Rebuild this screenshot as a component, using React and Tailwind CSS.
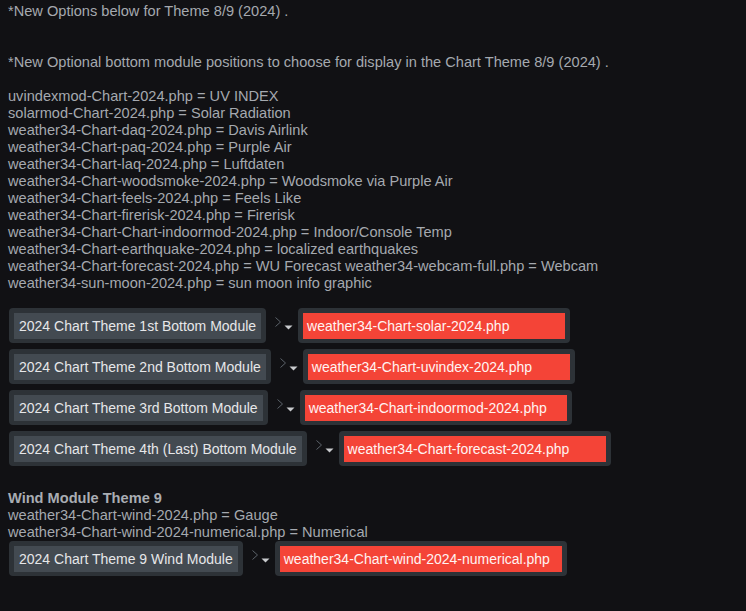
import React from "react";

function Arrow() {
  return (
    <svg width="18" height="18" viewBox="0 0 18 18" className="shrink-0 ml-[9px] mr-[5px]">
      <path d="M0.5 0.5 L5.5 5 L0.5 9.5" fill="none" stroke="#5c636a" strokeWidth="1" />
      <path d="M9.5 8.5 L17.5 8.5 L13.5 12.5 Z" fill="#c9cbce" />
    </svg>
  );
}

function Row({ label, value, width }) {
  return (
    <div className="flex items-center">
      <div className="bg-[#2d3237] rounded-[4px] p-[5px] pb-[4px]">
        <div className="bg-[#434a51] h-[26px] px-[5px] flex items-center text-[#e6e7e9] whitespace-nowrap">
          {label}
        </div>
      </div>
      <Arrow />
      <div className="bg-[#2d3237] rounded-[4px] p-[5px] pb-[4px]">
        <div
          className="bg-[#f44437] h-[26px] pl-[4px] flex items-center text-[#fff3f2] whitespace-nowrap"
          style={{ width }}
        >
          {value}
        </div>
      </div>
    </div>
  );
}

export default function App() {
  const lines = [
    "uvindexmod-Chart-2024.php = UV INDEX",
    "solarmod-Chart-2024.php = Solar Radiation",
    "weather34-Chart-daq-2024.php = Davis Airlink",
    "weather34-Chart-paq-2024.php = Purple Air",
    "weather34-Chart-laq-2024.php = Luftdaten",
    "weather34-Chart-woodsmoke-2024.php = Woodsmoke via Purple Air",
    "weather34-Chart-feels-2024.php = Feels Like",
    "weather34-Chart-firerisk-2024.php = Firerisk",
    "weather34-Chart-Chart-indoormod-2024.php = Indoor/Console Temp",
    "weather34-Chart-earthquake-2024.php = localized earthquakes",
    "weather34-Chart-forecast-2024.php = WU Forecast weather34-webcam-full.php = Webcam",
    "weather34-sun-moon-2024.php = sun moon info graphic",
  ];
  return (
    <div
      className="min-h-[611px] w-full bg-[#111114] text-[#a5a9af] text-[14.6px] leading-[17px] pl-[8px] pt-[3px]"
      style={{ fontFamily: '"Liberation Sans", Arial, sans-serif' }}
    >
      <div>*New Options below for Theme 8/9 (2024) .</div>
      <div className="mt-[34px]">
        *New Optional bottom module positions to choose for display in the Chart Theme 8/9 (2024) .
      </div>
      <div className="mt-[17px]">
        {lines.map((l) => (
          <div key={l}>{l}</div>
        ))}
      </div>
      <div className="mt-[16px] ml-[1px] flex flex-col gap-[6px] text-[14px]">
        <Row label="2024 Chart Theme 1st Bottom Module" value="weather34-Chart-solar-2024.php" width={262} />
        <Row label="2024 Chart Theme 2nd Bottom Module" value="weather34-Chart-uvindex-2024.php" width={262} />
        <Row label="2024 Chart Theme 3rd Bottom Module" value="weather34-Chart-indoormod-2024.php" width={262} />
        <Row label="2024 Chart Theme 4th (Last) Bottom Module" value="weather34-Chart-forecast-2024.php" width={262} />
      </div>
      <div className="mt-[24px] font-bold text-[#a9adb3]">Wind Module Theme 9</div>
      <div>weather34-Chart-wind-2024.php = Gauge</div>
      <div>weather34-Chart-wind-2024-numerical.php = Numerical</div>
      <div className="ml-[1px] text-[14px]">
        <Row label="2024 Chart Theme 9 Wind Module" value="weather34-Chart-wind-2024-numerical.php" width={282} />
      </div>
    </div>
  );
}
